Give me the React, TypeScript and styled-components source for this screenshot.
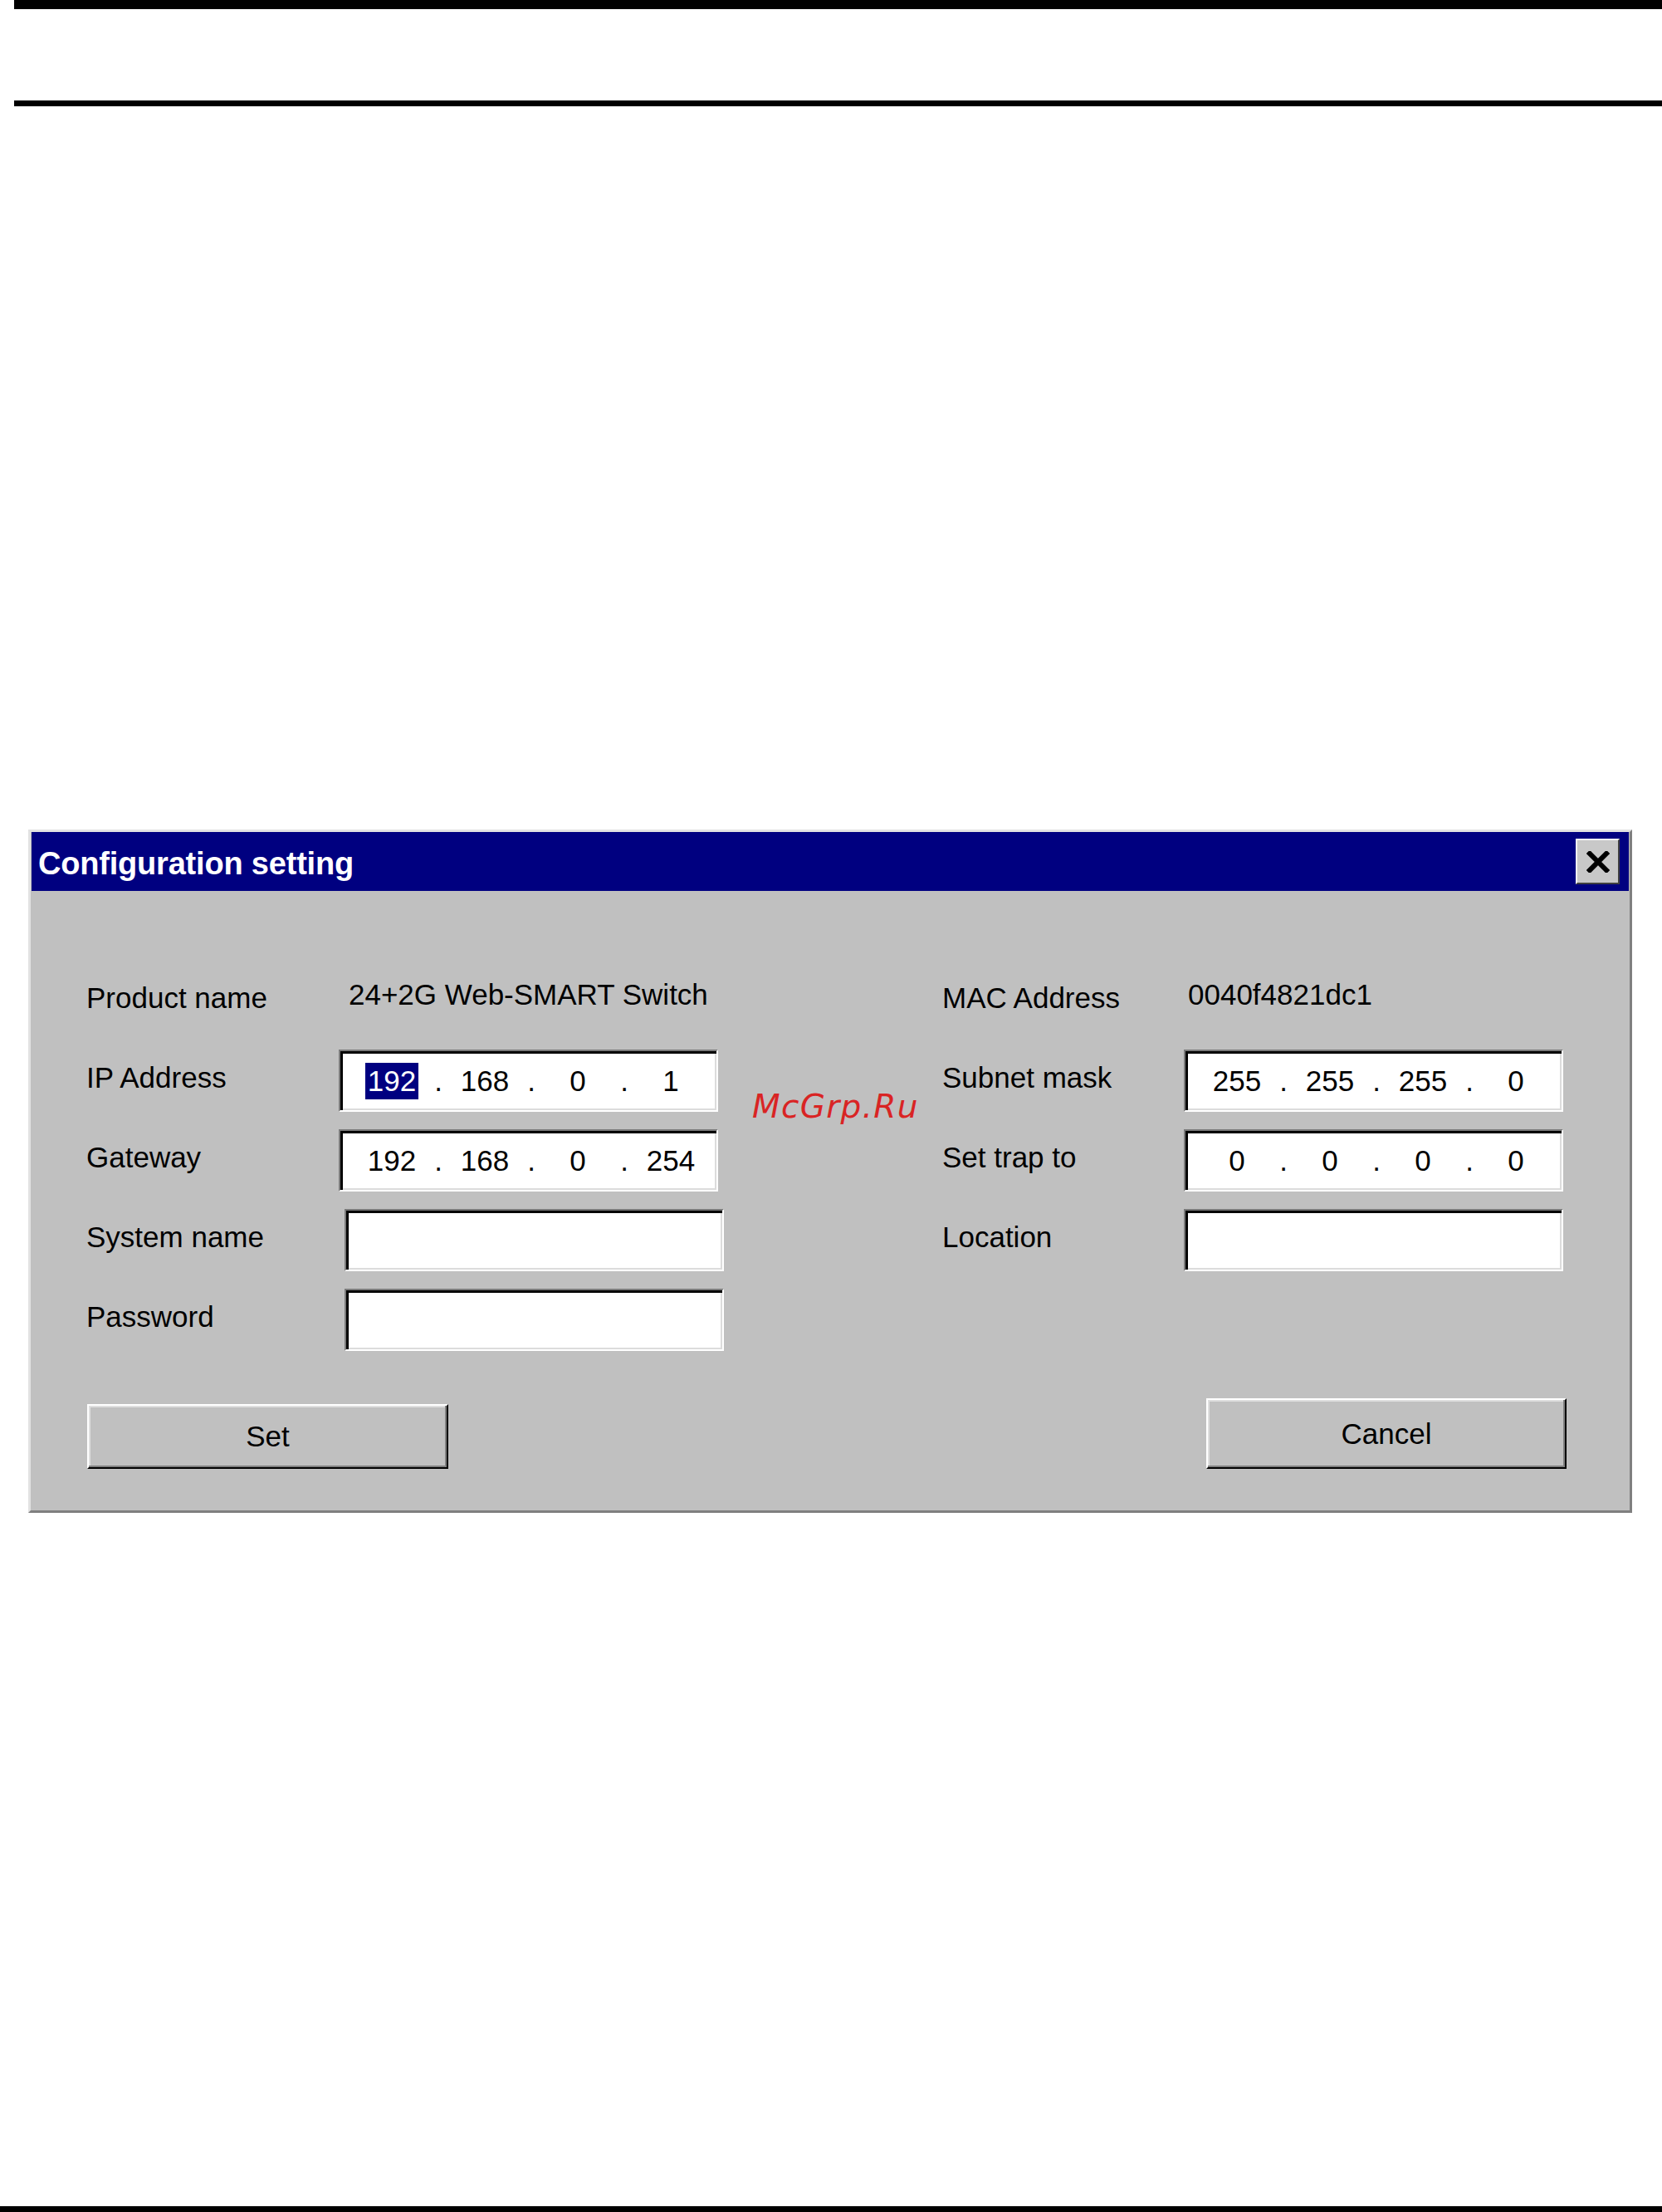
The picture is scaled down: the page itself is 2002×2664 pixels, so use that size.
import React from 'react'
import styled, { createGlobalStyle } from 'styled-components'

const GlobalStyle = createGlobalStyle`
  html, body {
    margin: 0;
    padding: 0;
    background: #ffffff;
  }
  * {
    box-sizing: border-box;
  }
`

type IpRow = { label: string; octets: string[]; selected?: number }

const leftRows: IpRow[] = [
  { label: 'IP Address', octets: ['192', '168', '0', '1'], selected: 0 },
  { label: 'Gateway', octets: ['192', '168', '0', '254'] },
]

const rightRows: IpRow[] = [
  { label: 'Subnet mask', octets: ['255', '255', '255', '0'] },
  { label: 'Set trap to', octets: ['0', '0', '0', '0'] },
]

const IpAddressField = ({ octets, selected }: { octets: string[]; selected?: number }) => (
  <IpBox>
    {octets.map((o, i) => (
      <React.Fragment key={i}>
        {i > 0 && <Dot>.</Dot>}
        <Octet>{i === selected ? <Selected>{o}</Selected> : o}</Octet>
      </React.Fragment>
    ))}
  </IpBox>
)

const CloseIcon = () => (
  <svg width="28" height="26" viewBox="0 0 28 26">
    <path d="M4 3 L24 23 M24 3 L4 23" stroke="#000" strokeWidth="6" strokeLinecap="square" />
  </svg>
)

const App = () => {
  return (
    <Page>
      <GlobalStyle />
      <TopRule />
      <HeaderRule />

      <Dialog>
        <TitleBar>
          <Title>Configuration setting</Title>
          <CloseButton aria-label="Close">
            <CloseIcon />
          </CloseButton>
        </TitleBar>

        <Body>
          <Columns>
            <Pane $label={304} $field={464}>
              <Label>Product name</Label>
              <Value $indent={12}>24+2G Web-SMART Switch</Value>
              {leftRows.map((r) => (
                <React.Fragment key={r.label}>
                  <Label>{r.label}</Label>
                  <Cell>
                    <IpAddressField octets={r.octets} selected={r.selected} />
                  </Cell>
                </React.Fragment>
              ))}
              <Label>System name</Label>
              <Cell>
                <TextBox $offset={7} />
              </Cell>
              <Label>Password</Label>
              <Cell>
                <TextBox $offset={7} />
              </Cell>
            </Pane>

            <Pane $label={291} $field={461}>
              <Label>MAC Address</Label>
              <Value $indent={5}>0040f4821dc1</Value>
              {rightRows.map((r) => (
                <React.Fragment key={r.label}>
                  <Label>{r.label}</Label>
                  <Cell>
                    <IpAddressField octets={r.octets} />
                  </Cell>
                </React.Fragment>
              ))}
              <Label>Location</Label>
              <Cell>
                <TextBox $offset={0} />
              </Cell>
            </Pane>
          </Columns>

          <ButtonRow>
            <Button $w={435} $h={78}>Set</Button>
            <Button $w={434} $h={85}>Cancel</Button>
          </ButtonRow>
        </Body>

        <Watermark>McGrp.Ru</Watermark>
      </Dialog>

      <BottomRule />
    </Page>
  )
}

export default App

const Page = styled.div`
  width: 2002px;
  height: 2664px;
  display: flex;
  flex-direction: column;
  background: #fff;
  overflow: hidden;
`

const TopRule = styled.div`
  margin-left: 17px;
  height: 11px;
  background: #000;
`

const HeaderRule = styled.div`
  margin: 110px 0 0 17px;
  height: 7px;
  background: #000;
`

const BottomRule = styled.div`
  margin-top: auto;
  height: 7px;
  background: #000;
`

const Dialog = styled.div`
  position: relative;
  margin: 871px 0 0 34px;
  width: 1932px;
  height: 823px;
  background: #c0c0c0;
  border: 3px solid;
  border-color: #e2e2e2 #7f7f7f #7f7f7f #e2e2e2;
  padding: 0 1px;
  display: flex;
  flex-direction: column;
`

const TitleBar = styled.div`
  height: 71px;
  background: #000080;
  display: flex;
  align-items: center;
  justify-content: space-between;
  padding: 0 11px 0 8px;
`

const Title = styled.span`
  font-family: 'Liberation Sans', Arial, sans-serif;
  font-weight: 700;
  font-size: 38px;
  color: #fff;
  letter-spacing: -0.2px;
  padding-top: 6px;
`

const CloseButton = styled.button`
  width: 53px;
  height: 55px;
  padding: 0;
  background: #c8c8c8;
  border: 2px solid;
  border-color: #f4f4f4 #404040 #404040 #f4f4f4;
  display: flex;
  align-items: center;
  justify-content: center;
`

const Body = styled.div`
  flex: 1;
  padding: 95px 75px 50px 66px;
  display: flex;
  flex-direction: column;
`

const Columns = styled.div`
  display: flex;
  gap: 263px;
`

const Pane = styled.div<{ $label: number; $field: number }>`
  display: grid;
  grid-template-columns: ${(p) => p.$label}px ${(p) => p.$field}px;
  grid-auto-rows: 75px;
  row-gap: 21px;
`

const textFont = `
  font-family: 'Liberation Sans', Arial, sans-serif;
  font-size: 35px;
  color: #000;
`

const Label = styled.div`
  ${textFont}
  display: flex;
  align-items: center;
  padding-bottom: 8px;
  white-space: nowrap;
`

const Value = styled.div<{ $indent: number }>`
  ${textFont}
  display: flex;
  align-items: center;
  padding-left: ${(p) => p.$indent}px;
  padding-bottom: 15px;
  white-space: nowrap;
`

const Cell = styled.div`
  display: flex;
  align-items: stretch;
`

const sunken = `
  background: #fff;
  border: 2px solid;
  border-color: #7a7a7a #ffffff #ffffff #7a7a7a;
  box-shadow: inset 3px 3px 0 #000, inset -2px -2px 0 #dcdcdc;
`

const IpBox = styled.div`
  ${sunken}
  width: 457px;
  display: flex;
  align-items: center;
  padding-left: 14px;
`

const Octet = styled.span`
  ${textFont}
  width: 96px;
  text-align: center;
`

const Dot = styled.span`
  ${textFont}
  width: 16px;
  text-align: center;
`

const Selected = styled.span`
  display: inline-block;
  background: #000080;
  color: #fff;
  padding: 0 3px;
  line-height: 44px;
`

const TextBox = styled.div<{ $offset: number }>`
  ${sunken}
  width: 457px;
  margin-left: ${(p) => p.$offset}px;
`

const ButtonRow = styled.div`
  margin-top: 57px;
  display: flex;
  align-items: flex-end;
  justify-content: space-between;
  padding-left: 1px;
`

const Button = styled.button<{ $w: number; $h: number }>`
  ${textFont}
  width: ${(p) => p.$w}px;
  height: ${(p) => p.$h}px;
  background: #c0c0c0;
  border: 2px solid;
  border-color: #ffffff #000000 #000000 #ffffff;
  box-shadow: inset -2px -2px 0 #808080, inset 2px 2px 0 #dfdfdf;
  padding: 0;
`

const Watermark = styled.span`
  position: absolute;
  left: 869px;
  top: 308px;
  font-family: 'DejaVu Sans', sans-serif;
  font-style: oblique;
  font-size: 39px;
  letter-spacing: 1.3px;
  color: #d92424;
  pointer-events: none;
`
